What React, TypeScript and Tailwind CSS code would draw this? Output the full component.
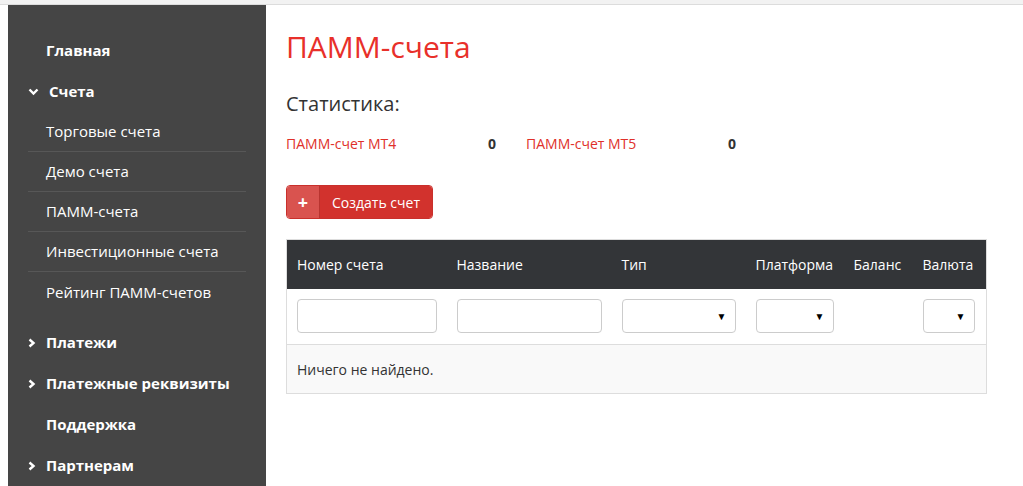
import React from "react";

const font = { fontFamily: '"Open Sans", "Liberation Sans", sans-serif' };

function ChevronRight() {
  return (
    <svg width="8" height="10" viewBox="0 0 8 10" className="block">
      <path d="M1.5 1.5 L5.5 5 L1.5 8.5" fill="none" stroke="white" strokeWidth="2.4" />
    </svg>
  );
}

function ChevronDown() {
  return (
    <svg width="11" height="8" viewBox="0 0 11 8" className="block">
      <path d="M1.5 1.5 L5.5 5.5 L9.5 1.5" fill="none" stroke="white" strokeWidth="2.4" />
    </svg>
  );
}

function TopItem({ label, icon }: { label: string; icon?: "right" | "down" }) {
  return (
    <div className="h-[41px] flex items-center pl-5 text-white font-bold text-[15px]">
      <span className={icon === "down" ? "w-[21px]" : "w-[18px]"}>
        {icon === "right" && <ChevronRight />}
        {icon === "down" && <ChevronDown />}
      </span>
      <span>{label}</span>
    </div>
  );
}

const subItems = ["Торговые счета", "Демо счета", "ПАММ-счета", "Инвестиционные счета", "Рейтинг ПАММ-счетов"];

function Select({ w }: { w: string }) {
  return (
    <div className={`${w} h-[34px] border border-[#cccccc] rounded-[4px] bg-white flex items-center justify-end pr-[8px]`}>
      <span className="text-[10px] text-black leading-none">▼</span>
    </div>
  );
}

export default function App() {
  return (
    <div className="w-[1023px] h-[486px] bg-white overflow-hidden flex flex-col" style={font}>
      <div className="h-[5px] bg-[#f2f2f2] border-b border-[#dcdcdc] shrink-0" />
      <div className="flex flex-1 min-h-0">
        <aside className="ml-2 w-[258px] bg-[#454545] pt-[25px] shrink-0">
          <TopItem label="Главная" />
          <TopItem label="Счета" icon="down" />
          <div className="mx-5">
            {subItems.map((s, i) => (
              <div
                key={s}
                className={`h-[40px] flex items-center pl-[18px] text-white text-[15px] ${i < subItems.length - 1 ? "border-b border-[#575757]" : ""}`}
              >
                {s}
              </div>
            ))}
          </div>
          <div className="h-[10px]" />
          <TopItem label="Платежи" icon="right" />
          <TopItem label="Платежные реквизиты" icon="right" />
          <TopItem label="Поддержка" />
          <TopItem label="Партнерам" icon="right" />
        </aside>

        <main className="pl-5 pt-[24px] flex-1">
          <h1 className="text-[30px] leading-[36px] text-[#e8302a]">ПАММ-счета</h1>
          <h2 className="mt-[26px] text-[20px] leading-[26px] text-[#333333]">Статистика:</h2>
          <div className="mt-[18px] flex text-[14px] leading-[18px]">
            <div className="w-[240px] flex pr-[30px] justify-between">
              <span className="text-[#e0302a]">ПАММ-счет MT4</span>
              <span className="font-bold text-[#333333]">0</span>
            </div>
            <div className="w-[240px] flex pr-[30px] justify-between">
              <span className="text-[#e0302a]">ПАММ-счет MT5</span>
              <span className="font-bold text-[#333333]">0</span>
            </div>
          </div>

          <button className="mt-[32px] h-[34px] flex rounded-[4px] overflow-hidden border border-[#c9302c]">
            <span className="w-[33px] bg-[#d9534f] border-r border-[#b93430] flex items-center justify-center text-white font-bold text-[18px] leading-none">
              +
            </span>
            <span className="bg-[#d2322d] text-white text-[14px] px-3 flex items-center">Создать счет</span>
          </button>

          <table className="mt-[20px] w-[700px] border border-[#dddddd] border-collapse text-[14px] text-[#333333] table-fixed">
            <colgroup>
              <col className="w-[160px]" />
              <col className="w-[165px]" />
              <col className="w-[134px]" />
              <col className="w-[98px]" />
              <col className="w-[69px]" />
              <col className="w-[74px]" />
            </colgroup>
            <thead>
              <tr className="bg-[#333538] text-white h-[49px]">
                <th className="font-normal text-left px-[10px] whitespace-nowrap">Номер счета</th>
                <th className="font-normal text-left px-[10px]">Название</th>
                <th className="font-normal text-left px-[10px]">Тип</th>
                <th className="font-normal text-left px-[10px]">Платформа</th>
                <th className="font-normal text-left px-[10px]">Баланс</th>
                <th className="font-normal text-left px-[10px]">Валюта</th>
              </tr>
            </thead>
            <tbody>
              <tr className="h-[56px] border-b border-[#dddddd]">
                <td className="px-[10px]">
                  <div className="w-[140px] h-[34px] border border-[#cccccc] rounded-[4px]" />
                </td>
                <td className="px-[10px]">
                  <div className="w-[145px] h-[34px] border border-[#cccccc] rounded-[4px]" />
                </td>
                <td className="px-[10px]">
                  <Select w="w-[114px]" />
                </td>
                <td className="px-[10px]">
                  <Select w="w-[78px]" />
                </td>
                <td className="px-[10px]" />
                <td className="px-[10px]">
                  <Select w="w-[52px]" />
                </td>
              </tr>
              <tr className="h-[49px] bg-[#f9f9f9]">
                <td colSpan={6} className="px-[10px]">
                  Ничего не найдено.
                </td>
              </tr>
            </tbody>
          </table>
        </main>
      </div>
    </div>
  );
}
